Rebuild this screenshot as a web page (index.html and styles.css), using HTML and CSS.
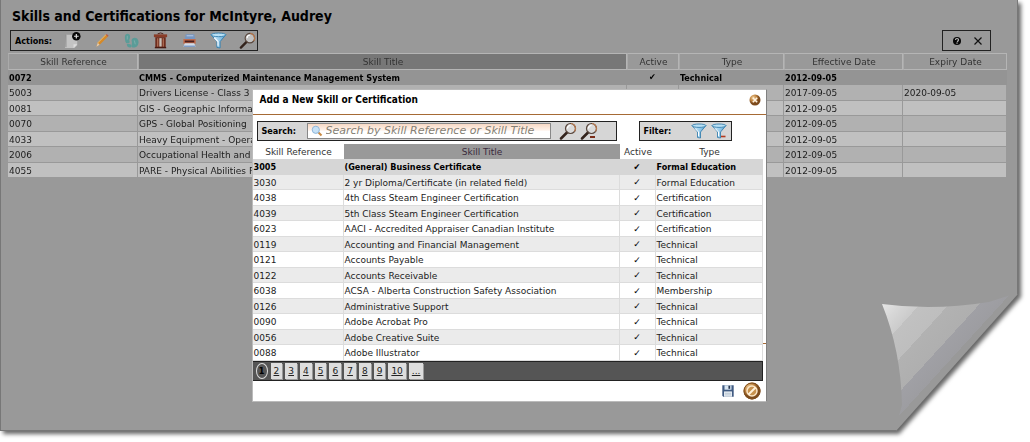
FILE: index.html
```
<!DOCTYPE html>
<html lang="en">
<head>
<meta charset="utf-8">
<title>Skills and Certifications</title>
<link rel="stylesheet" href="styles.css">
</head>
<body>
<svg class="defs" aria-hidden="true">
  <defs>
    <linearGradient id="blue" x1="0" x2="1"><stop offset="0" stop-color="#e4f4fc"/><stop offset=".5" stop-color="#9fd0ee"/><stop offset="1" stop-color="#4e9ccf"/></linearGradient>
    <radialGradient id="gold" cx=".35" cy=".3"><stop offset="0" stop-color="#f3d3a0"/><stop offset=".6" stop-color="#c08440"/><stop offset="1" stop-color="#7c4a1c"/></radialGradient>
    <symbol id="magnifier" viewBox="0 0 18 18">
      <path d="M2 16.500 8 10.500" stroke="#33231c" stroke-width="2.500" stroke-linecap="round"/>
      <circle cx="11.500" cy="6.500" r="5" fill="#dedede" fill-opacity=".6" stroke="#58463c" stroke-width="1.200"/>
      <path d="M12 1.500a5 5 0 0 1 3.500 8" fill="none" stroke="#bd7a4c" stroke-width="1.200"/>
      <path d="M8.500 6.500a3 3 0 0 1 3-3" fill="none" stroke="#fff" stroke-width="1.200"/>
    </symbol>
    <symbol id="funnel" viewBox="0 0 16 16">
      <path d="M1 2.500 6.500 9v5.500l3 .5V9L15 2.500z" fill="url(#blue)" stroke="#3a81ae" stroke-width=".9" stroke-linejoin="round"/>
      <ellipse cx="8" cy="2.700" rx="7" ry="1.700" fill="#b9e0f4" stroke="#3a81ae" stroke-width=".9"/>
      <path d="M4 5.500 7.500 9v4" fill="none" stroke="#fff"/>
    </symbol>
  </defs>
</svg>
<div class="shadow">
  <main class="sheet">
    <h1 class="page-title">Skills and Certifications for McIntyre, Audrey</h1>
    <div class="bars">
      <div class="toolbar actions">
        <span class="label">Actions:</span>
        <button class="icon" aria-label="Add"><svg viewBox="0 0 18 18"><path d="M1 3h9l3 2v9l-3 3H0z" fill="#c3c3c3"/><path d="M1 3v13" stroke="#8a8a8a"/><path d="m9 17 4-4H9z" fill="#dedede"/><circle cx="12" cy="4.500" r="4.500" fill="#080808"/><path d="M12 2v5M9.500 4.500h5" stroke="#ddd" stroke-width="1.300"/></svg></button>
        <button class="icon" aria-label="Edit"><svg viewBox="0 0 18 18"><path d="m2.500 15.500 1.500-4L13 2.500l2 2-9 9z" fill="#d68a28"/><path d="M4 11.500 13 2.500" stroke="#f0bd66"/><path d="m2.500 15.500 1.500-4 2 2z" fill="#e0cab0"/><path d="m12.500 3 1-1 2 2-1 1z" fill="#b65b52"/></svg></button>
        <button class="icon" aria-label="Track"><svg viewBox="0 0 18 18"><path d="M2 5c0-4 5-4 5.500-1S6 8 7 10s-4 3-4.500 0S2 7 2 5zM9 9c0-3 4-4 6-2s2 6 0 8-6 2-6 0 1-3 0-6z" fill="#5b9c98"/><path d="M4 13c3-1 5 0 5 2s-5 2-5-2z" fill="#5b9c98"/><path d="M4.500 4v4M12 9l1 4" stroke="#80b0ac"/></svg></button>
        <button class="icon" aria-label="Delete"><svg viewBox="0 0 18 18"><path d="M6 2q3-2 6 0" fill="none" stroke="#4d2017"/><path d="M2 2.500h14v3H2z" fill="#8a3d28"/><path d="M3.500 5.500h11v11h-11z" fill="#6c2a1c"/><path d="M6 6.500v9m6-9v9" stroke="#a86850" stroke-width="1.500"/><path d="M9 6.500v9" stroke="#c9c1b8" stroke-width="2.500"/><path d="M3 16.500h12" stroke="#491a12" stroke-width="1.500"/></svg></button>
        <button class="icon" aria-label="Print"><svg viewBox="0 0 18 18"><path d="M5 2.500h9l1 5H4z" fill="#7796c1"/><path d="M6 4h7" stroke="#bccde5"/><path d="M2.500 7.500h13v5h-13z" fill="#c36a49"/><path d="M4 10h10" stroke="#4a2020" stroke-width="2"/><path d="M4 12h10l1.500 3.500h-13z" fill="#d3dce8"/><path d="M3 15h12" stroke="#5481bd"/></svg></button>
        <button class="icon" aria-label="Filter"><svg><use href="#funnel"/></svg></button>
        <button class="icon" aria-label="Search"><svg><use href="#magnifier"/></svg></button>
      </div>
      <div class="toolbar window-tools">
        <button class="icon small" aria-label="Help"><svg viewBox="0 0 10 10"><circle cx="5" cy="5" r="4" fill="#080808"/><path d="M3.500 4q0-1.500 1.500-1.500t1.500 1.300T5 5.800m0 .8v1.200" fill="none" stroke="#bbb" stroke-width="1.200"/></svg></button>
        <button class="icon small" aria-label="Close"><svg viewBox="0 0 10 10"><path d="m1.500 1.500 7 7m0-7-7 7" stroke="#111" stroke-width="1.200"/></svg></button>
      </div>
    </div>
    <table class="grid skills">
      <colgroup><col class="s-ref"><col><col class="s-active"><col class="s-type"><col class="s-date"><col class="s-expiry"></colgroup>
      <thead><tr><th>Skill Reference</th><th class="sorted">Skill Title</th><th>Active</th><th>Type</th><th>Effective Date</th><th>Expiry Date</th></tr></thead>
      <tbody>
        <tr class="selected"><td>0072</td><td>CMMS - Computerized Maintenance Management System</td><td class="tick">✔</td><td>Technical</td><td>2012-09-05</td><td></td></tr>
        <tr><td>5003</td><td>Drivers License - Class 3</td><td></td><td></td><td>2017-09-05</td><td>2020-09-05</td></tr>
        <tr><td>0081</td><td>GIS - Geographic Informa</td><td></td><td></td><td>2012-09-05</td><td></td></tr>
        <tr><td>0070</td><td>GPS - Global Positioning</td><td></td><td></td><td>2012-09-05</td><td></td></tr>
        <tr><td>4033</td><td>Heavy Equipment - Opera</td><td></td><td></td><td>2012-09-05</td><td></td></tr>
        <tr><td>2006</td><td>Occupational Health and</td><td></td><td></td><td>2012-09-05</td><td></td></tr>
        <tr><td>4055</td><td>PARE - Physical Abilities F</td><td></td><td></td><td>2012-09-05</td><td></td></tr>
      </tbody>
    </table>

    <section class="dialog" role="dialog" aria-labelledby="dialog-title">
      <header class="dialog-head">
        <h2 id="dialog-title">Add a New Skill or Certification</h2>
        <button class="icon close" aria-label="Close dialog"><svg viewBox="0 0 12 12"><circle cx="6" cy="6" r="5.500" fill="url(#gold)"/><path d="m3.800 3.800 4.400 4.400m0-4.400L3.800 8.200" stroke="#fff3e2" stroke-width="1.600"/></svg></button>
      </header>
      <div class="dialog-bars">
        <div class="toolbar light search">
          <label class="label" for="q">Search:</label>
          <div class="field">
            <svg viewBox="0 0 12 12"><path d="m7 7 3.500 3.500" stroke="#c98b45" stroke-width="2"/><circle cx="4.800" cy="4.800" r="3.600" fill="#c8e2f6" stroke="#8fb6da"/></svg>
            <input id="q" type="text" placeholder="Search by Skill Reference or Skill Title">
          </div>
          <button class="icon" aria-label="Run search"><svg><use href="#magnifier"/></svg></button>
          <button class="icon" aria-label="Clear search"><svg viewBox="0 0 18 18"><use href="#magnifier"/><path d="M10 15h5" stroke="#7c2d18" stroke-width="2"/></svg></button>
        </div>
        <div class="toolbar light filter">
          <span class="label">Filter:</span>
          <button class="icon" aria-label="Filter list"><svg><use href="#funnel"/></svg></button>
          <button class="icon" aria-label="Clear filter"><svg viewBox="0 0 16 16"><use href="#funnel"/><path d="M10 13.500h4.500" stroke="#b33a1e" stroke-width="1.600"/></svg></button>
        </div>
      </div>
      <table class="grid picker">
        <colgroup><col class="p-ref"><col><col class="p-active"><col class="p-type"></colgroup>
        <thead><tr><th>Skill Reference</th><th class="sorted">Skill Title</th><th>Active</th><th>Type</th></tr></thead>
        <tbody>
          <tr class="selected"><td>3005</td><td>(General) Business Certificate</td><td class="tick">✔</td><td>Formal Education</td></tr>
          <tr><td>3030</td><td>2 yr Diploma/Certificate (in related field)</td><td class="tick">✓</td><td>Formal Education</td></tr>
          <tr><td>4038</td><td>4th Class Steam Engineer Certification</td><td class="tick">✓</td><td>Certification</td></tr>
          <tr><td>4039</td><td>5th Class Steam Engineer Certification</td><td class="tick">✓</td><td>Certification</td></tr>
          <tr><td>6023</td><td>AACI - Accredited Appraiser Canadian Institute</td><td class="tick">✓</td><td>Certification</td></tr>
          <tr><td>0119</td><td>Accounting and Financial Management</td><td class="tick">✓</td><td>Technical</td></tr>
          <tr><td>0121</td><td>Accounts Payable</td><td class="tick">✓</td><td>Technical</td></tr>
          <tr><td>0122</td><td>Accounts Receivable</td><td class="tick">✓</td><td>Technical</td></tr>
          <tr><td>6038</td><td>ACSA - Alberta Construction Safety Association</td><td class="tick">✓</td><td>Membership</td></tr>
          <tr><td>0126</td><td>Administrative Support</td><td class="tick">✓</td><td>Technical</td></tr>
          <tr><td>0090</td><td>Adobe Acrobat Pro</td><td class="tick">✓</td><td>Technical</td></tr>
          <tr><td>0056</td><td>Adobe Creative Suite</td><td class="tick">✓</td><td>Technical</td></tr>
          <tr><td>0088</td><td>Adobe Illustrator</td><td class="tick">✓</td><td>Technical</td></tr>
        </tbody>
      </table>
      <nav class="pager" aria-label="Pages">
        <span class="current">1</span><a href="#">2</a><a href="#">3</a><a href="#">4</a><a href="#">5</a><a href="#">6</a><a href="#">7</a><a href="#">8</a><a href="#">9</a><a href="#">10</a><a href="#">...</a>
      </nav>
      <footer class="dialog-foot">
        <button class="icon" aria-label="Save"><svg viewBox="0 0 16 16"><path d="M1.500 1.500h13v13h-12l-1-1z" fill="#405b82"/><path d="M4 1.500h8v5H4z" fill="#d8e6f2"/><path d="M8.500 2h2v3.500h-2z" fill="#24324b"/><path d="M3.500 8.500h9v6h-9z" fill="#f2f6fa"/><path d="M4.500 10.500h7m-7 2h7" stroke="#a8b8c8"/></svg></button>
        <button class="icon cancel" aria-label="Cancel"><svg viewBox="0 0 18 18"><circle cx="9" cy="9" r="8.500" fill="url(#gold)"/><circle cx="9" cy="9" r="5" fill="#c8924e" stroke="#fbe6c6" stroke-width="1.500"/><path d="m5.500 12.500 7-7" stroke="#fff2dc" stroke-width="2"/><circle cx="9" cy="9" r="8" fill="none" stroke="#80501f"/></svg></button>
      </footer>
    </section>

    <svg class="curl" viewBox="0 0 136 137" aria-hidden="true">
      <defs>
        <linearGradient id="fold" gradientUnits="userSpaceOnUse" x1="4" y1="8" x2="73" y2="71">
          <stop offset="0" stop-color="#e6e6e6"/><stop offset=".16" stop-color="#d6d6d6"/><stop offset=".3" stop-color="#cbcbcb"/><stop offset=".3" stop-color="#c1c1c1"/><stop offset=".53" stop-color="#bebebe"/><stop offset=".53" stop-color="#b2b2b2"/><stop offset=".77" stop-color="#afafaf"/><stop offset=".77" stop-color="#a0a0a5"/><stop offset=".94" stop-color="#9d9da1"/><stop offset=".94" stop-color="#999"/>
        </linearGradient>
      </defs>
      <path d="M1 11Q53 18 108 9L136 0 14 137 21 112Q20 58 1 11Z" fill="url(#fold)"/>
    </svg>
  </main>
</div>
</body>
</html>
```
FILE: styles.css
```
* { box-sizing: border-box; }

body {
  margin: 0;
  background: #fff;
  color: #1c1c1c;
  font: 9px/12px "DejaVu Sans", sans-serif;
}

.defs { position: absolute; width: 0; height: 0; }

.shadow {
  padding: 0 12px 11px 0;
  filter: drop-shadow(3px 3px 2px #666);
}

.sheet {
  position: relative;
  min-height: calc(100vh - 11px);
  padding: 6px 10px 0 7px;
  background: #999;
  border: solid #777;
  border-width: 0 1px 1px 1px;
  clip-path: polygon(0 0, 100% 0, 100% calc(100% - 137px), calc(100% - 122px) 100%, 0 100%);
}

h1, h2, .label, .selected td, .current {
  font-family: "DejaVu Sans Condensed", "DejaVu Sans", sans-serif;
  font-weight: bold;
  color: #000;
}

.page-title { margin: 0 0 4px 4px; font-size: 14px; line-height: 20px; }

.bars { display: flex; justify-content: space-between; padding: 0 16px 0 2px; margin-bottom: 2px; }

.toolbar {
  display: flex;
  align-items: center;
  height: 21px;
  border: 1px solid #222;
}

.toolbar.light { height: 20px; background: #d6d6d6; }

.icon {
  display: flex;
  flex: none;
  width: 18px;
  height: 18px;
  padding: 0;
  border: 0;
  background: none;
}

.icon svg { width: 100%; height: 100%; }

.actions { gap: 12px; padding: 0 1px 0 4px; }
.actions .icon { width: 17px; height: 17px; }
.actions .label { width: 38px; }
.window-tools { gap: 11px; padding: 0 7px 0 9px; }
.icon.small { width: 10px; height: 10px; }

.grid { width: 100%; table-layout: fixed; border-collapse: separate; border-spacing: 0; }
.grid th, .grid td { padding: 0 0 0 1px; overflow: hidden; white-space: nowrap; line-height: 12px; }
.grid th { font-weight: normal; color: #333; }
.grid td { padding-top: 1px; text-align: left; }
.grid .tick { padding: 0; text-align: center; color: #000; }

.skills th { height: 17px; border: 1px solid #b5b5b5; border-left-color: #aaa; }
.skills .sorted { background: #777; }
.skills td { height: 15px; background: #c0c0c0; border: solid #999; border-width: 0 1px 1px 0; }
.skills tr:nth-child(even) td { height: 16px; background: #b1b1b1; }
.skills .selected td { background: #949494; border-color: #949494; }
.s-ref { width: 130px; }
.s-active { width: 52px; }
.s-type { width: 105px; }
.s-date { width: 119px; }
.s-expiry { width: 104px; }

.dialog {
  position: absolute;
  top: 89px;
  left: 0;
  right: 0;
  width: 515px;
  margin: 0 auto;
  background: #fff;
  border: 1px solid #bbb;
  border-right-color: #808080;
}

.dialog-head {
  display: flex;
  align-items: center;
  justify-content: space-between;
  height: 25px;
  padding: 0 5px 4px 7px;
  border-bottom: 1px solid #a66a35;
}

.dialog h2 { margin: 0; font-size: 10px; line-height: 14px; }
.icon.close { width: 12px; height: 12px; }

.dialog-bars { display: flex; gap: 22px; padding: 6px 4px 3px; }
.search { flex: 0 0 360px; padding-left: 4px; gap: 3px; }
.search .label { width: 42px; }

.field {
  display: flex;
  align-items: center;
  width: 244px;
  height: 16px;
  margin-right: 5px;
  padding-left: 3px;
  border: 1px solid #888;
  background: linear-gradient(#f7d9c5, #fff3eb 45%, #fff 50%);
}

.field svg { flex: none; width: 12px; height: 12px; }

.field input {
  flex: 1;
  min-width: 0;
  padding: 0 0 0 3px;
  border: 0;
  outline: 0;
  background: none;
  font: italic 11px/14px "DejaVu Sans", sans-serif;
}

.field input::placeholder { color: #857f74; opacity: 1; }

.filter { flex: 0 0 88px; gap: 4px; padding: 0 4px; }
.filter .label { width: 43px; }
.filter .icon { width: 16px; height: 16px; }

.picker { width: calc(100% - 3px); }
.picker th { height: 15px; }
.picker .sorted { background: #999; color: #3a2a3c; }
.picker td { height: 15px; border: solid #dcdcdc; border-width: 0 1px 1px 0; }
.picker tr:nth-child(odd) td { height: 16px; }
.picker tr:nth-child(even) td { background: #ebebeb; }
.picker .selected td { background: #d6d6d6; border-color: #d6d6d6; }
.picker .tick { font-weight: bold; }
.p-ref { width: 91px; }
.p-active { width: 36px; }
.p-type { width: 107px; }

.pager {
  display: flex;
  align-items: center;
  gap: 3px;
  height: 20px;
  margin-right: 3px;
  padding-left: 3px;
  background: #555;
  border: solid #222;
  border-width: 1px 1px 1px 0;
}

.pager a { padding: 2px 3px; background: #ddd; color: #222; box-shadow: 1px 1px #999; }
.pager .current { width: 12px; border: 1px solid #ddd; border-radius: 50%; line-height: 14px; text-align: center; }

.dialog-foot { display: flex; align-items: center; justify-content: flex-end; gap: 8px; height: 20px; padding-right: 5px; }
.dialog-foot .icon { width: 14px; height: 14px; }
.dialog-foot .cancel { width: 18px; height: 18px; }

/* resize notch on the dialog's right edge */
.dialog::after {
  content: "";
  position: absolute;
  right: 0;
  bottom: 57px;
  width: 3px;
  height: 1px;
  background: #a66a35;
}

.curl { position: absolute; right: 0; bottom: 0; width: 136px; height: 137px; }
```
